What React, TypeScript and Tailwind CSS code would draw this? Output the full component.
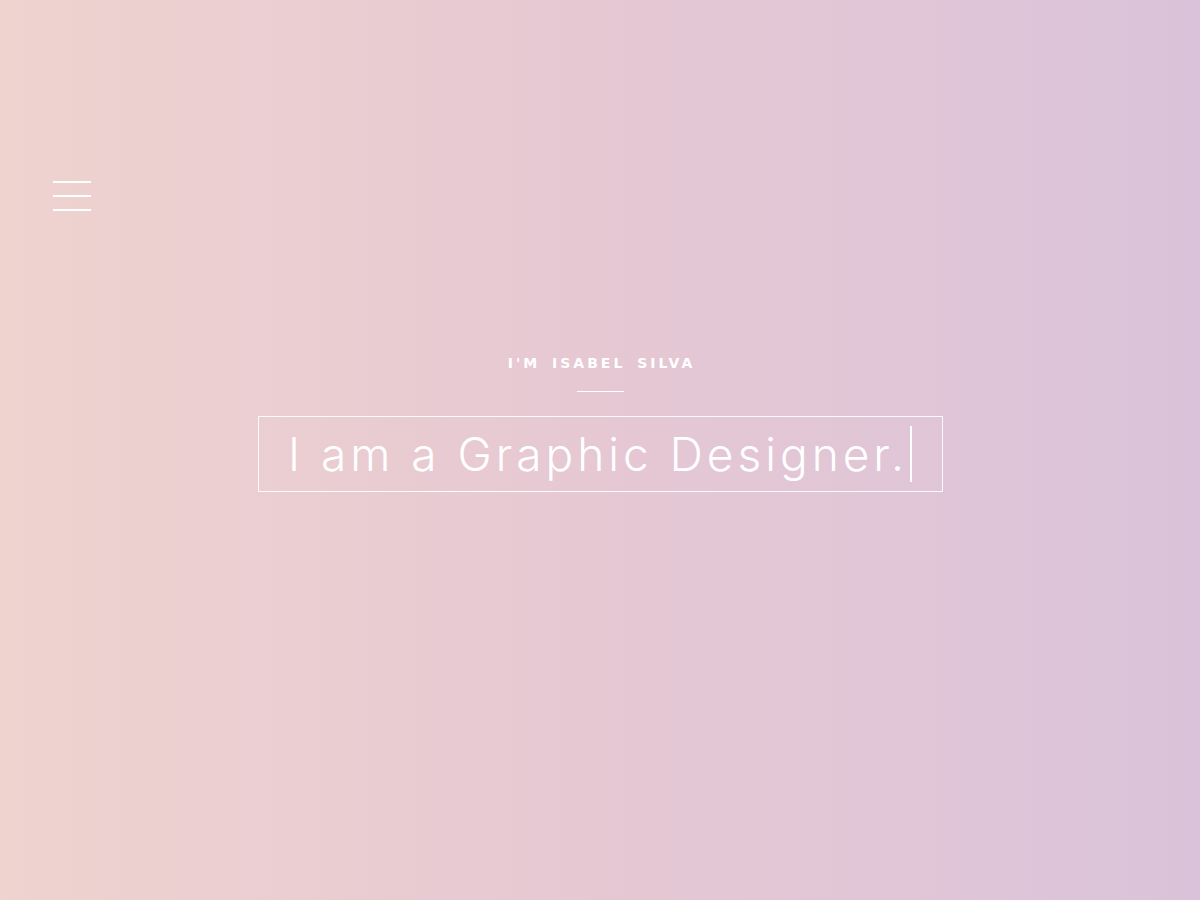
import React from "react";

export default function App() {
  return (
    <div
      className="w-[1200px] h-[900px] overflow-hidden bg-gradient-to-r from-[#eed3cf] via-[#e6c8d3] to-[#dac3da] text-white"
      style={{ fontFamily: '"DejaVu Sans", "Noto Sans", sans-serif' }}
    >
      <div className="pt-[181px] pl-[53px]">
        <button className="flex flex-col gap-[12px] w-[38px]" aria-label="menu">
          <span className="block h-[2px] w-[38px] bg-white" />
          <span className="block h-[2px] w-[38px] bg-white" />
          <span className="block h-[2px] w-[38px] bg-white" />
        </button>
      </div>
      <div className="flex flex-col items-center mt-[142px]">
        <div className="text-[14px] font-bold tracking-[3px] [word-spacing:4px] leading-[20px] pl-[3px]">
          I'M ISABEL SILVA
        </div>
        <div className="mt-[18px] h-px w-[47px] bg-white" />
        <div className="mt-[24px] w-[685px] h-[76px] border border-white/90 flex items-center justify-center">
          <span
            className="text-[46px] tracking-[4px] leading-none font-light flex items-center"
            style={{ fontFamily: 'Inter, "Noto Sans", sans-serif' }}
          >
            I am a Graphic Designer.
            <span className="inline-block w-[2px] h-[56px] bg-white ml-[2px]" />
          </span>
        </div>
      </div>
    </div>
  );
}
